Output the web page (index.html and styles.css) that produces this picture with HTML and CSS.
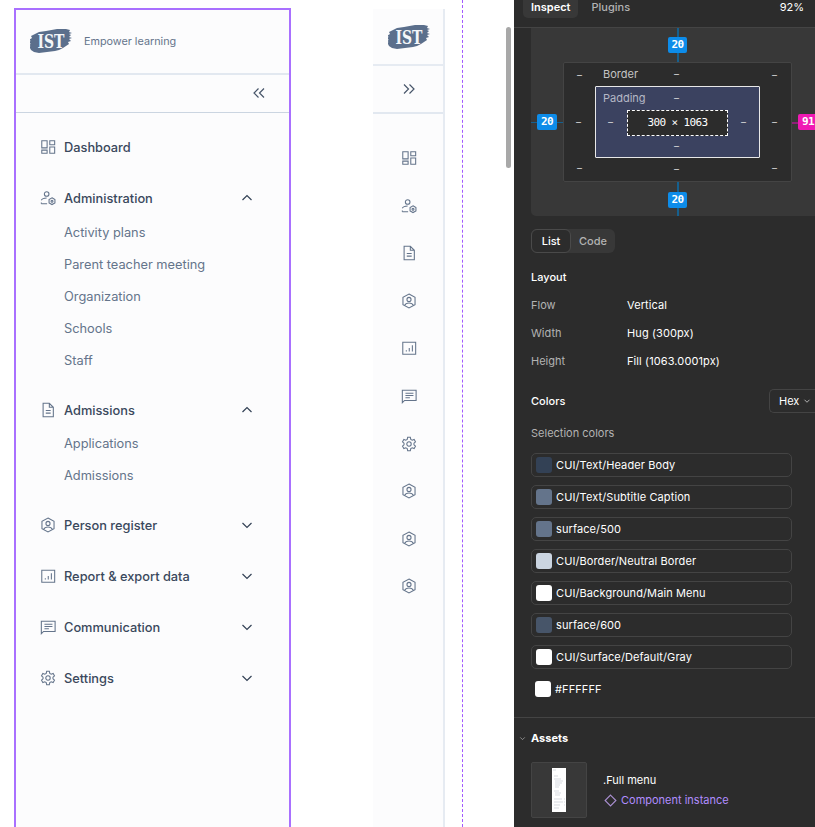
FILE: index.html
```html
<!DOCTYPE html>
<html lang="en">
<head>
  <meta charset="UTF-8">
  <meta name="viewport" content="width=device-width, initial-scale=1">
  <title>Full menu inspect</title>
  <link rel="stylesheet" href="styles.css">
</head>
<body>
  <svg class="sprite" width="0" height="0">
    <defs>
      <symbol id="i-dash" viewBox="0 0 18 18"><path d="M2 2h6v8H2zM11 2h5.500v4.500H11zM11 9h5.500v7H11zM2 12.500h6V16H2z"/></symbol>
      <symbol id="i-admin" viewBox="0 0 18 18"><circle cx="7.500" cy="4.500" r="2.600"/><path d="M1.500 11.500C2.300 9.800 4.500 9 7.500 9M1.500 15.500v-1.500M1.500 15.500H8"/><path d="M13.500 8.800l3.300 1.900v3.800l-3.300 1.900-3.300-1.900v-3.800z"/><circle cx="13.500" cy="12.600" r="1.100"/></symbol>
      <symbol id="i-doc" viewBox="0 0 18 18"><path d="M3.500 1.500h7l4.500 4.500v10.500h-11.500zM10.500 1.500V6H15M6.500 9.500h5.500M6.500 12.500h5.500"/></symbol>
      <symbol id="i-hex" viewBox="0 0 18 18"><path d="M9 1.200l6.800 3.700v8.200L9 16.800l-6.800-3.700V4.900z"/><circle cx="9" cy="7.200" r="2.300"/><path d="M4.200 13.800C5 11.800 7 11.200 9 11.200s4 .6 4.800 2.600"/></symbol>
      <symbol id="i-chart" viewBox="0 0 18 18"><path d="M2 2.500h14.500v13.500H2zM6 13v-1.500M9.300 13V9M12.800 13V6"/></symbol>
      <symbol id="i-chat" viewBox="0 0 18 18"><path d="M1.500 2.500h15.500v11.500H4L1.500 16.500zM5 6h9M5 8.500h9M5 11h5"/></symbol>
      <symbol id="i-gear" viewBox="0 0 18 18"><circle cx="9" cy="9" r="2.500"/><path d="M7.500 1.500h3l.5 2.300 1.600.9 2.200-.8 1.500 2.600-1.700 1.600v1.800l1.700 1.600-1.500 2.600-2.200-.8-1.600.9-.5 2.300h-3l-.5-2.300-1.600-.9-2.200.8-1.500-2.600 1.700-1.600V8.100L1.700 6.500l1.500-2.600 2.200.8L7 3.800z"/></symbol>
      <symbol id="i-up" viewBox="0 0 12 12"><path d="M1.500 8L6 3.500 10.500 8"/></symbol>
      <symbol id="i-down" viewBox="0 0 12 12"><path d="M1.500 4L6 8.500 10.500 4"/></symbol>
      <symbol id="i-logo" viewBox="0 0 42 26">
        <path class="logo-brush" d="M9 3l7-1 11-2 9 0 4 1-1 2 3 1-3 1 2 1-2 2 3 1-3 1 2 2-3 1 1 2-3 2-3 2-4 2-4 1-8 1-8 1-5-1-3-2-1-2-2-1 3-1-4-1 4-1-3-2 3-1-2-1 3-2-1-2z"/>
        <text class="logo-text" x="21" y="19" text-anchor="middle" textLength="27" lengthAdjust="spacingAndGlyphs">IST</text>
      </symbol>
    </defs>
  </svg>

  <div class="canvas">
    <aside class="menu menu-full">
      <div class="menu-brand">
        <svg class="logo"><use href="#i-logo"/></svg>
        <span class="tagline">Empower learning</span>
      </div>
      <div class="menu-toggle">
        <svg class="toggle-icon" viewBox="0 0 12 12"><path d="M5.500 1.500L1 6l4.500 4.500M11 1.500L6.500 6l4.500 4.500"/></svg>
      </div>
      <nav class="nav">
        <div class="nav-head"><svg class="icon"><use href="#i-dash"/></svg><span>Dashboard</span></div>

        <div class="nav-group nav-group-admin">
          <div class="nav-head"><svg class="icon"><use href="#i-admin"/></svg><span>Administration</span><svg class="chev"><use href="#i-up"/></svg></div>
          <div class="sub">
            <a>Activity plans</a>
            <a>Parent teacher meeting</a>
            <a>Organization</a>
            <a>Schools</a>
            <a>Staff</a>
          </div>
        </div>

        <div class="nav-group">
          <div class="nav-head"><svg class="icon"><use href="#i-doc"/></svg><span>Admissions</span><svg class="chev"><use href="#i-up"/></svg></div>
          <div class="sub">
            <a>Applications</a>
            <a>Admissions</a>
          </div>
        </div>

        <div class="nav-head"><svg class="icon"><use href="#i-hex"/></svg><span>Person register</span><svg class="chev"><use href="#i-down"/></svg></div>
        <div class="nav-head"><svg class="icon"><use href="#i-chart"/></svg><span>Report &amp; export data</span><svg class="chev"><use href="#i-down"/></svg></div>
        <div class="nav-head"><svg class="icon"><use href="#i-chat"/></svg><span>Communication</span><svg class="chev"><use href="#i-down"/></svg></div>
        <div class="nav-head"><svg class="icon"><use href="#i-gear"/></svg><span>Settings</span><svg class="chev"><use href="#i-down"/></svg></div>
      </nav>
    </aside>

    <aside class="menu menu-mini">
      <div class="mini-brand"><svg class="logo"><use href="#i-logo"/></svg></div>
      <div class="mini-toggle">
        <svg class="toggle-icon" viewBox="0 0 12 12"><path d="M1 1.500L5.500 6 1 10.500M6.500 1.500L11 6l-4.500 4.500"/></svg>
      </div>
      <div class="mini-icons">
        <svg class="icon"><use href="#i-dash"/></svg>
        <svg class="icon"><use href="#i-admin"/></svg>
        <svg class="icon"><use href="#i-doc"/></svg>
        <svg class="icon"><use href="#i-hex"/></svg>
        <svg class="icon"><use href="#i-chart"/></svg>
        <svg class="icon"><use href="#i-chat"/></svg>
        <svg class="icon"><use href="#i-gear"/></svg>
        <svg class="icon"><use href="#i-hex"/></svg>
        <svg class="icon"><use href="#i-hex"/></svg>
        <svg class="icon"><use href="#i-hex"/></svg>
      </div>
    </aside>

    <div class="guide"></div>
    <div class="scroll-thumb"></div>
  </div>

  <section class="panel">
    <div class="tabs">
      <span class="tab tab-active">Inspect</span>
      <span class="tab">Plugins</span>
      <span class="zoom-level">92%</span>
    </div>

    <div class="box-model">
      <div class="line line-top"></div>
      <div class="line line-bottom"></div>
      <div class="line line-left"></div>
      <div class="line line-right"></div>
      <span class="badge badge-top">20</span>
      <span class="badge badge-left">20</span>
      <span class="badge badge-right">91</span>
      <span class="badge badge-bottom">20</span>

      <div class="bm-border">
        <span class="bm-label bm-label-border">Border</span>
        <i class="dash d-tl">–</i><i class="dash d-tc">–</i><i class="dash d-tr">–</i>
        <i class="dash d-ml">–</i><i class="dash d-mr">–</i>
        <i class="dash d-bl">–</i><i class="dash d-bc">–</i><i class="dash d-br">–</i>
        <div class="bm-padding">
          <span class="bm-label bm-label-padding">Padding</span>
          <i class="dash p-t">–</i><i class="dash p-l">–</i><i class="dash p-r">–</i><i class="dash p-b">–</i>
          <div class="bm-content">300 × 1063</div>
        </div>
      </div>
    </div>

    <div class="segment">
      <span class="seg seg-active">List</span>
      <span class="seg">Code</span>
    </div>

    <h4 class="section-title layout-title">Layout</h4>
    <div class="props">
      <span class="prop-key">Flow</span><span class="prop-val">Vertical</span>
      <span class="prop-key">Width</span><span class="prop-val">Hug (300px)</span>
      <span class="prop-key">Height</span><span class="prop-val">Fill (1063.0001px)</span>
    </div>

    <div class="colors-head">
      <h4 class="section-title">Colors</h4>
      <div class="hex-select">Hex <svg viewBox="0 0 12 12"><path d="M3 4.500L6 7.500 9 4.500"/></svg></div>
    </div>
    <div class="selection-label">Selection colors</div>

    <div class="color-list">
      <div class="color-row"><span class="swatch sw-header"></span>CUI/Text/Header Body</div>
      <div class="color-row"><span class="swatch sw-caption"></span>CUI/Text/Subtitle Caption</div>
      <div class="color-row"><span class="swatch sw-caption"></span>surface/500</div>
      <div class="color-row"><span class="swatch sw-border"></span>CUI/Border/Neutral Border</div>
      <div class="color-row"><span class="swatch sw-white"></span>CUI/Background/Main Menu</div>
      <div class="color-row"><span class="swatch sw-600"></span>surface/600</div>
      <div class="color-row"><span class="swatch sw-white"></span>CUI/Surface/Default/Gray</div>
      <div class="color-row color-row-plain"><span class="swatch sw-white"></span>#FFFFFF</div>
    </div>

    <div class="assets">
      <h4 class="section-title assets-title">
        <svg viewBox="0 0 12 12"><path d="M3 4.500L6 7.500 9 4.500"/></svg>Assets
      </h4>
      <div class="asset">
        <div class="thumb">
          <svg class="thumb-page" viewBox="0 0 14 44">
            <path d="M1 2h3M2 8h4M2 11h7M3 13h8M3 15h7M3 17h5M3 19h4M2 23h5M3 25h6M3 27h5M2 31h8M12 31h1M2 34h9M12 34h1M2 37h6M12 37h1M2 40h5"/>
          </svg>
        </div>
        <div class="asset-info">
          <div class="asset-name">.Full menu</div>
          <div class="asset-kind">
            <svg viewBox="0 0 14 14"><path d="M7 1.200L12.800 7 7 12.800 1.200 7z"/></svg>Component instance
          </div>
        </div>
      </div>
    </div>
  </section>
</body>
</html>
```

FILE: styles.css
```css
* {
  box-sizing: border-box;
}
html, body {
  margin: 0;
  height: 827px;
  overflow: hidden;
}
body {
  display: flex;
  background: #fff;
  font-family: Inter, "Liberation Sans", sans-serif;
}
.sprite {
  position: absolute;
}

/* free canvas on the left */
.canvas {
  position: relative;
  width: 514px;
  flex: none;
  overflow: hidden;
}
.menu {
  position: absolute;
  background: #fcfcfd;
  height: 840px;
}
.menu-full {
  left: 14px;
  top: 8px;
  width: 277px;
  border: 2px solid #a970ff;
}
.menu-mini {
  left: 373px;
  top: 9px;
  width: 72px;
  border-right: 2px solid #e6ebf2;
}
.logo {
  width: 42px;
  height: 26px;
  flex: none;
}
.logo-brush {
  fill: #5b6f8c;
}
.logo-text {
  fill: #f4f6f9;
  font: bold 18px "DejaVu Serif", serif;
}
.menu-brand {
  height: 65px;
  display: flex;
  align-items: center;
  gap: 12px;
  padding-left: 14px;
  border-bottom: 2px solid #e2e8f0;
}
.tagline {
  font-size: 10.800px;
  color: #64748b;
}
.menu-toggle {
  height: 38px;
  display: flex;
  align-items: center;
  justify-content: flex-end;
  padding: 0 24px 2px 0;
  border-bottom: 1px solid #cbd5e1;
}
.toggle-icon {
  width: 12px;
  height: 12px;
  fill: none;
  stroke: #475569;
  stroke-width: 1.200;
}
.nav {
  display: flex;
  flex-direction: column;
  gap: 17px;
  padding: 17px 0 0 24px;
}
.nav-head {
  display: flex;
  align-items: center;
  height: 34px;
  gap: 8px;
  font-size: 12.800px;
  font-weight: 500;
  color: #3a485c;
}
.icon {
  width: 16px;
  height: 16px;
  flex: none;
  fill: none;
  stroke: #64748b;
  stroke-width: 1.200;
}
.chev {
  width: 12px;
  height: 12px;
  margin-left: auto;
  margin-right: 36px;
  fill: none;
  stroke: #334155;
  stroke-width: 1.200;
}
.sub {
  display: flex;
  flex-direction: column;
  padding-left: 24px;
}
.nav-group-admin .sub {
  margin-top: 1px;
}
.sub a {
  height: 32px;
  line-height: 34px;
  font-size: 12.800px;
  color: #64748b;
}
.mini-brand {
  height: 57px;
  display: flex;
  justify-content: center;
  align-items: center;
  padding: 2px 0 0 1px;
  border-bottom: 2px solid #e6ebf2;
}
.mini-toggle {
  height: 48px;
  display: flex;
  align-items: center;
  justify-content: center;
  padding: 0 0 1px 1px;
  border-bottom: 2px solid #e2e8f0;
}
.mini-icons {
  display: flex;
  flex-direction: column;
  align-items: center;
  gap: 31.600px;
  padding: 36px 0 0 1px;
}
.guide {
  position: absolute;
  left: 462px;
  top: 0;
  bottom: 0;
  width: 0;
  border-left: 1px dashed #a259ff;
}
.scroll-thumb {
  position: absolute;
  left: 506px;
  top: 27px;
  width: 5px;
  height: 141px;
  border-radius: 3px;
  background: #a8a8a8;
}

/* inspect panel */
.panel {
  flex: 1;
  min-width: 0;
  background: #2c2c2c;
  color: #fff;
  font-size: 11px;
  font-weight: 400;
}
.tabs {
  height: 28px;
  display: flex;
  align-items: flex-start;
  padding-left: 9px;
  border-bottom: 1px solid #444;
  gap: 5px;
}
.tab {
  height: 18px;
  line-height: 14px;
  padding: 0 8px;
  font-weight: 500;
  color: #b3b3b3;
}
.tab-active {
  font-weight: 600;
  color: #fff;
  background: #383838;
  border-radius: 0 0 5px 5px;
}
.zoom-level {
  margin-left: auto;
  margin-right: 11px;
  line-height: 14px;
}
.box-model {
  position: relative;
  margin-left: 17px;
  height: 188px;
  background: #383838;
  border-radius: 0 0 0 5px;
}
.line {
  position: absolute;
  background: #15608f;
}
.line-top, .line-bottom {
  left: 146px;
  width: 2px;
}
.line-top { top: 0; height: 34px; }
.line-bottom { top: 154px; height: 34px; }
.line-left {
  left: 0;
  top: 94px;
  width: 32px;
  height: 1px;
}
.line-right {
  left: 261px;
  top: 94px;
  width: 8px;
  height: 2px;
  background: #8f1f78;
}
.badge {
  position: absolute;
  height: 16px;
  padding: 0 2px;
  text-align: center;
  font: 600 11px/16px "DejaVu Sans Mono", monospace;
  letter-spacing: -0.5px;
  background: #0d8ce9;
  border-radius: 2px;
}
.badge-top { left: 137px; top: 9px; width: 19px; }
.badge-bottom { left: 137px; top: 164px; width: 19px; }
.badge-left { left: 6px; top: 86px; width: 20px; }
.badge-right { left: 267px; top: 86px; width: 20px; background: #f019b4; }
.bm-border {
  position: absolute;
  left: 32px;
  top: 34px;
  width: 229px;
  height: 120px;
  background: #2c2c2c;
  border: 1px solid #444;
  border-radius: 2px;
}
.bm-padding {
  position: absolute;
  left: 31px;
  top: 23px;
  width: 165px;
  height: 72px;
  background: #3b4260;
  border: 1px solid #e8e8e8;
  border-radius: 1px;
}
.bm-content {
  position: absolute;
  left: 31px;
  top: 23px;
  width: 101px;
  height: 26px;
  text-align: center;
  font: 500 11px/24px "DejaVu Sans Mono", monospace;
  letter-spacing: -0.6px;
  background: #2c2c2c;
  border: 1px dashed #fff;
}
.bm-label {
  position: absolute;
  font-size: 11px;
  line-height: 14px;
  color: #c4c4c4;
}
.bm-label-border { left: 39px; top: 4px; }
.bm-label-padding { left: 7px; top: 4px; color: #b5b8c6; }
.dash {
  position: absolute;
  font-style: normal;
  font-size: 10px;
  line-height: 12px;
  color: #d8d8d8;
}
.d-tl { left: 13px; top: 6px; }
.d-tc { left: 110px; top: 5px; }
.d-tr { left: 208px; top: 6px; }
.d-ml { left: 12px; top: 53px; }
.d-mr { left: 208px; top: 53px; }
.d-bl { left: 13px; top: 99px; }
.d-bc { left: 110px; top: 100px; }
.d-br { left: 208px; top: 99px; }
.p-t { left: 78px; top: 5px; }
.p-l { left: 12px; top: 29px; }
.p-r { left: 145px; top: 29px; }
.p-b { left: 78px; top: 53px; }

.segment {
  display: flex;
  width: 84px;
  height: 24px;
  margin: 13px 0 0 17px;
  background: #383838;
  border-radius: 6px;
  font-weight: 500;
  color: #b3b3b3;
}
.seg {
  flex: 1;
  line-height: 24px;
  text-align: center;
}
.seg-active {
  flex: 0 0 40px;
  line-height: 22px;
  color: #fff;
  background: #2c2c2c;
  border: 1px solid #4a4a4a;
  border-radius: 6px;
}
.section-title {
  margin: 0;
  font-size: 11px;
  font-weight: 500;
  line-height: 14px;
}
.layout-title {
  margin: 17px 0 0 17px;
}
.props {
  display: grid;
  grid-template-columns: 96px 1fr;
  grid-auto-rows: 28px;
  margin: 7px 0 0 17px;
  line-height: 28px;
}
.prop-key {
  color: #b3b3b3;
}
.prop-val {
  letter-spacing: 0.1px;
}
.colors-head {
  display: flex;
  align-items: center;
  justify-content: space-between;
  height: 24px;
  margin: 14px 0 0 17px;
}
.hex-select {
  display: flex;
  align-items: center;
  gap: 3px;
  width: 46px;
  height: 24px;
  padding-left: 9px;
  flex: none;
  border: 1px solid #444;
  border-right: 0;
  border-radius: 5px 0 0 5px;
}
.hex-select svg {
  width: 10px;
  height: 10px;
  fill: none;
  stroke: #ccc;
}
.selection-label {
  margin: 13px 0 0 17px;
  line-height: 14px;
  color: #b3b3b3;
}
.color-list {
  display: flex;
  flex-direction: column;
  gap: 8px;
  margin: 13px 0 0 17px;
  width: 261px;
}
.color-row {
  display: flex;
  align-items: center;
  gap: 4px;
  height: 24px;
  padding-left: 4px;
  letter-spacing: 0.1px;
  border: 1px solid #444;
  border-radius: 5px;
}
.color-row-plain {
  border-color: transparent;
  padding-left: 3px;
}
.swatch {
  width: 16px;
  height: 16px;
  flex: none;
  border-radius: 3px;
}
.sw-header { background: #334155; }
.sw-caption { background: #64748b; }
.sw-border { background: #cbd5e1; }
.sw-white { background: #fff; }
.sw-600 { background: #475569; }
.assets {
  margin-top: 16px;
  padding: 13px 0 0 17px;
  border-top: 1px solid #444;
}
.assets-title {
  position: relative;
  font-weight: 700;
}
.assets-title svg {
  position: absolute;
  left: -13px;
  top: 3px;
  width: 9px;
  height: 9px;
  fill: none;
  stroke: #aaa;
}
.asset {
  display: flex;
  align-items: center;
  gap: 16px;
  margin-top: 17px;
}
.thumb {
  display: flex;
  justify-content: center;
  align-items: center;
  width: 56px;
  height: 56px;
  background: #383838;
  border: 1px solid #444;
  border-radius: 2px;
}
.thumb-page {
  width: 14px;
  height: 44px;
  background: #fff;
  fill: none;
  stroke: #c5cad3;
  stroke-width: 0.700;
}
.asset-info {
  display: flex;
  flex-direction: column;
  gap: 6px;
}
.asset-name {
  line-height: 14px;
}
.asset-kind {
  display: flex;
  align-items: center;
  gap: 4px;
  margin-left: 1px;
  line-height: 14px;
  color: #b18cff;
}
.asset-kind svg {
  width: 13px;
  height: 13px;
  fill: none;
  stroke: #a98fd0;
  stroke-width: 1.200;
}
```
